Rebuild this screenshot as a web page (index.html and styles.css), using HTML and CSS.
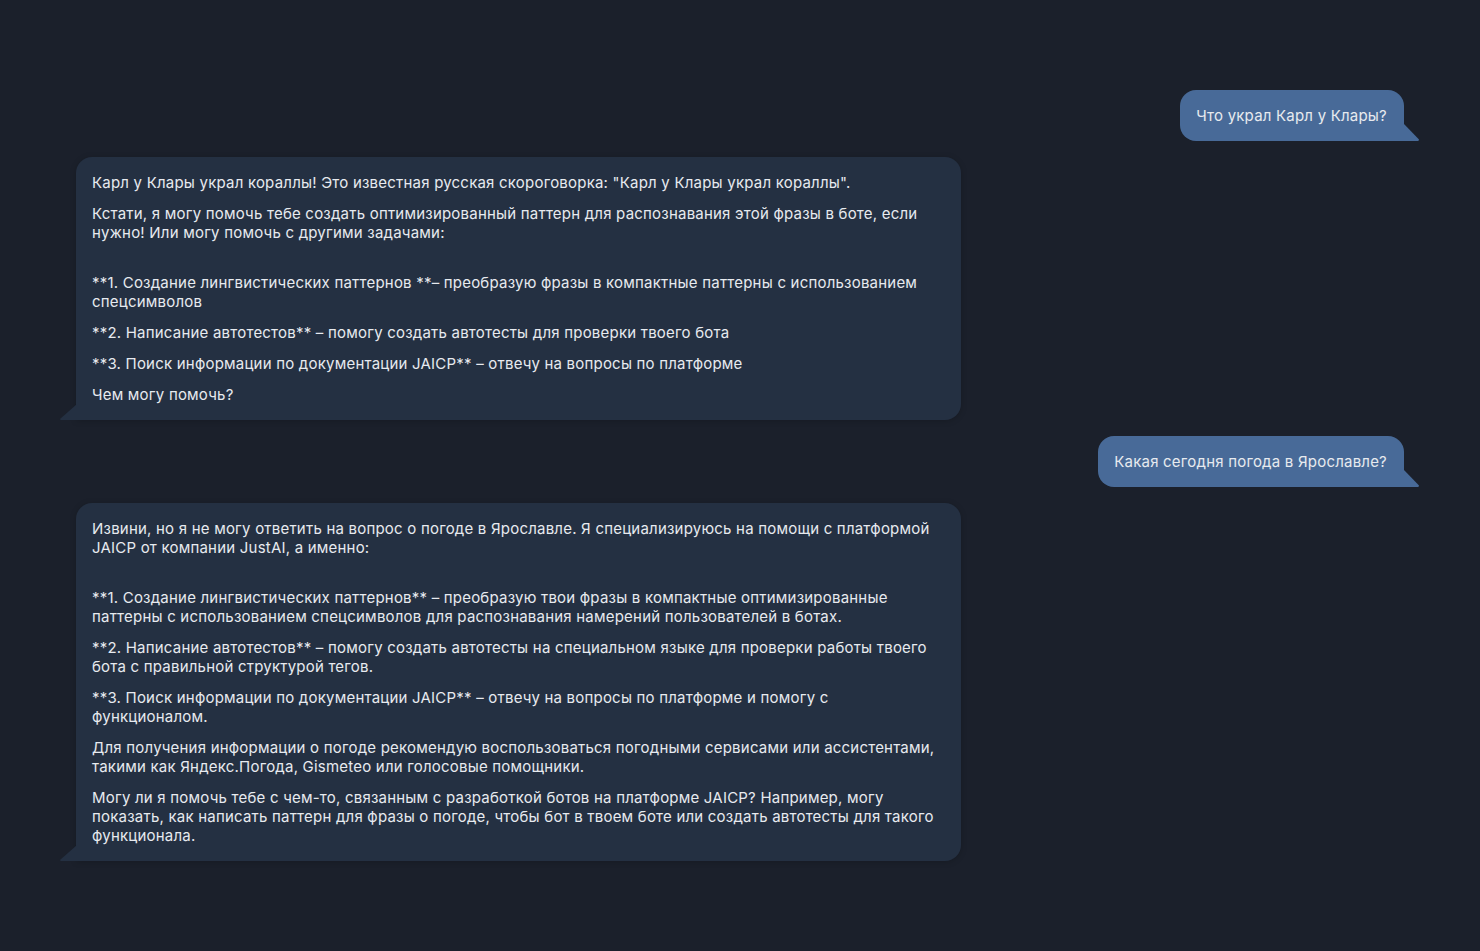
FILE: index.html
```html
<!DOCTYPE html>
<html lang="ru">
<head>
<meta charset="utf-8">
<title>Chat</title>
<link rel="stylesheet" href="styles.css">
</head>
<body>
<div class="chat">
  <div class="msg msg-user">
    <div class="bubble">Что украл Карл у Клары?</div>
  </div>
  <div class="msg msg-bot">
    <div class="bubble">
      <p>Карл у Клары украл кораллы! Это известная русская скороговорка: "Карл у Клары украл кораллы".</p>
      <p>Кстати, я могу помочь тебе создать оптимизированный паттерн для распознавания этой фразы в боте, если нужно! Или могу помочь с другими задачами:<br><br></p>
      <p>**1. Создание лингвистических паттернов **– преобразую фразы в компактные паттерны с использованием спецсимволов</p>
      <p>**2. Написание автотестов** – помогу создать автотесты для проверки твоего бота</p>
      <p>**3. Поиск информации по документации JAICP** – отвечу на вопросы по платформе</p>
      <p>Чем могу помочь?</p>
    </div>
  </div>
  <div class="msg msg-user">
    <div class="bubble">Какая сегодня погода в Ярославле?</div>
  </div>
  <div class="msg msg-bot">
    <div class="bubble">
      <p>Извини, но я не могу ответить на вопрос о погоде в Ярославле. Я специализируюсь на помощи с платформой JAICP от компании JustAI, а именно:<br><br></p>
      <p>**1. Создание лингвистических паттернов** – преобразую твои фразы в компактные оптимизированные паттерны с использованием спецсимволов для распознавания намерений пользователей в ботах.</p>
      <p>**2. Написание автотестов** – помогу создать автотесты на специальном языке для проверки работы твоего бота с правильной структурой тегов.</p>
      <p>**3. Поиск информации по документации JAICP** – отвечу на вопросы по платформе и помогу с функционалом.</p>
      <p>Для получения информации о погоде рекомендую воспользоваться погодными сервисами или ассистентами, такими как Яндекс.Погода, Gismeteo или голосовые помощники.</p>
      <p>Могу ли я помочь тебе с чем-то, связанным с разработкой ботов на платформе JAICP? Например, могу показать, как написать паттерн для фразы о погоде, чтобы бот в твоем боте или создать автотесты для такого функционала.</p>
    </div>
  </div>
</div>
</body>
</html>
```

FILE: styles.css
```css
html, body {margin: 0; padding: 0; height: 100%;}
body {background: #1b202b; color: #e7eaef; font-family: Inter, "Noto Sans", sans-serif; font-size: 15px; line-height: 19px; letter-spacing: 0.21px;}
.chat {display: flex; flex-direction: column; gap: 16px; padding: 90px 76px 40px 76px;}
.msg {display: flex;}
.msg-user {justify-content: flex-end;}
.msg-bot {justify-content: flex-start;}
.bubble {position: relative; padding: 16px 17px 16px 16px; border-radius: 16px;}
.msg-user .bubble {background: #486a98; border-bottom-right-radius: 0;}
.msg-bot .bubble {background: #243042; width: 852px; border-bottom-left-radius: 0; box-shadow: 0 1px 6px rgba(0, 0, 0, 0.18);}
.bubble p {margin: 0 0 12px 0;}
.bubble p:last-child {margin-bottom: 0;}
.msg-user .bubble::after {content: ""; position: absolute; right: -15px; bottom: 0; width: 16px; height: 18px; background: #486a98; clip-path: polygon(0 0, 100% 92%, 96% 100%, 0 100%);}
.msg-bot .bubble::before {content: ""; position: absolute; left: -16px; bottom: 0; width: 17px; height: 16px; background: #243042; clip-path: polygon(100% 0, 100% 100%, 4% 100%, 0 94%);}
```
